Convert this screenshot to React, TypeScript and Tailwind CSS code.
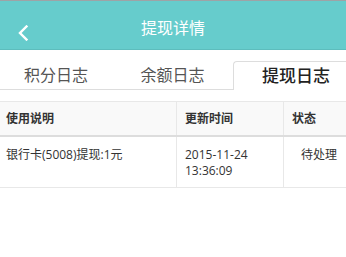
import React from "react";

export default function App() {
  return (
    <div className="w-[346px] h-[257px] overflow-hidden bg-white font-['Open_Sans','Noto_Sans_CJK_SC',sans-serif]">
      {/* Header */}
      <div className="h-[50px] border-t border-[#9ea3a6] border-b border-b-[#5dbdbd] bg-[#66cccc] grid grid-cols-[60px_1fr_60px] items-center">
        <div className="flex items-center pl-[17px] pt-[15px]">
          <svg width="12" height="16" viewBox="0 0 12 16">
            <path d="M9.5 1.5 L3 8 L9.5 14.5" fill="none" stroke="#fff" strokeWidth="2.4" strokeLinecap="square" strokeLinejoin="miter" />
          </svg>
        </div>
        <div className="text-center text-white text-[16px] leading-[20px] pt-[5px]">提现详情</div>
        <div />
      </div>

      {/* Tabs */}
      <div className="mt-[11px] flex h-[29px] border-b border-[#dddddd]">
        <div className="w-[112px] flex items-center justify-center text-[16px] text-[#555] leading-[20px]">积分日志</div>
        <div className="w-[121px] flex items-center justify-center text-[16px] text-[#555] leading-[20px]">余额日志</div>
        <div className="flex-1 h-[29px] -mb-px border-t border-l border-[#dddddd] rounded-tl-[4px] bg-white flex items-center pl-[28px] text-[17px] font-medium text-[#222] leading-[20px]">提现日志</div>
      </div>

      {/* Table */}
      <div className="mt-[11px] border-t border-[#e8e8e8]">
        <div className="grid grid-cols-[176px_107px_1fr] bg-[#f9f9f9] border-b-2 border-[#dddddd] text-[12px] font-bold text-[#333] leading-[17px]">
          <div className="pl-[6px] py-[8px]">使用说明</div>
          <div className="pl-[8px] py-[8px] border-l border-[#e8e8e8]">更新时间</div>
          <div className="pl-[8px] py-[8px] border-l border-[#e8e8e8]">状态</div>
        </div>
        <div className="grid grid-cols-[176px_107px_1fr] border-b border-[#e8e8e8] text-[12px] text-[#333] leading-[16px]">
          <div className="pl-[6px] pt-[10px] pb-[8px]">银行卡(5008)提现:1元</div>
          <div className="pl-[8px] pt-[10px] pb-[8px] border-l border-[#e8e8e8]">
            <div>2015-11-24</div>
            <div>13:36:09</div>
          </div>
          <div className="pl-[17px] pt-[10px] pb-[8px] border-l border-[#e8e8e8]">待处理</div>
        </div>
      </div>
    </div>
  );
}
